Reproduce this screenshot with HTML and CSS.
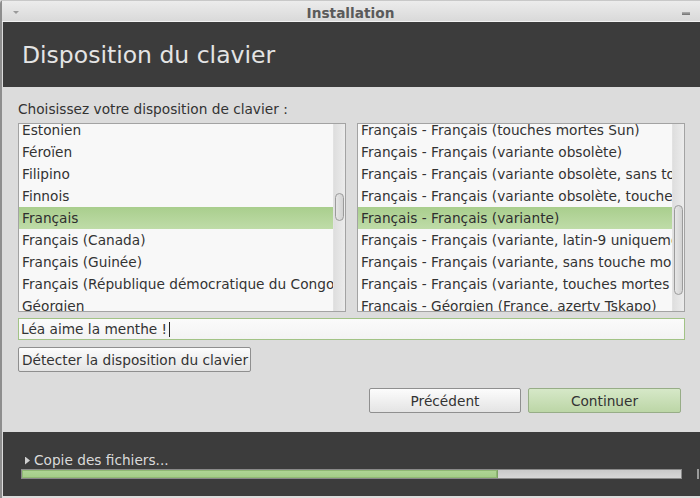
FILE: index.html
```html
<!DOCTYPE html>
<html lang="fr">
<head>
<meta charset="utf-8">
<title>Installation</title>
<link rel="stylesheet" href="styles.css">
</head>
<body>
<div class="window">
  <div class="titlebar">
    <span class="menu-tri"></span>
    <span class="title">Installation</span>
    <span class="min-btn"></span>
  </div>
  <div class="header">
    <h1 class="heading">Disposition du clavier</h1>
  </div>
  <div class="content">
    <div class="label">Choisissez votre disposition de clavier :</div>
    <div class="lists">
      <div class="list">
        <div class="viewport">
          <div class="rows">
            <div class="row">Estonien</div>
            <div class="row">Féroïen</div>
            <div class="row">Filipino</div>
            <div class="row">Finnois</div>
            <div class="row selected">Français</div>
            <div class="row">Français (Canada)</div>
            <div class="row">Français (Guinée)</div>
            <div class="row">Français (République démocratique du Congo)</div>
            <div class="row">Géorgien</div>
          </div>
        </div>
        <div class="scrollbar"><div class="thumb" style="margin-top:69px;height:28px"></div></div>
      </div>
      <div class="list">
        <div class="viewport">
          <div class="rows">
            <div class="row">Français - Français (touches mortes Sun)</div>
            <div class="row">Français - Français (variante obsolète)</div>
            <div class="row">Français - Français (variante obsolète, sans touches mortes)</div>
            <div class="row">Français - Français (variante obsolète, touches mortes Sun)</div>
            <div class="row selected">Français - Français (variante)</div>
            <div class="row">Français - Français (variante, latin-9 uniquement)</div>
            <div class="row">Français - Français (variante, sans touche morte)</div>
            <div class="row">Français - Français (variante, touches mortes Sun)</div>
            <div class="row">Français - Géorgien (France, azerty Tskapo)</div>
          </div>
        </div>
        <div class="scrollbar"><div class="thumb" style="margin-top:81px;height:90px"></div></div>
      </div>
    </div>
    <div class="entry">Léa aime la menthe !<span class="cursor"></span></div>
    <div class="detect-row"><button class="btn detect">Détecter la disposition du clavier</button></div>
    <div class="nav">
      <button class="btn nav-btn">Précédent</button>
      <button class="btn nav-btn primary">Continuer</button>
    </div>
  </div>
  <div class="footer">
    <div class="status"><span class="expander"></span><span class="status-text">Copie des fichiers...</span></div>
    <div class="progress-row">
      <div class="progress"><div class="fill" style="width:72.2%"></div></div>
      <div class="edge"></div>
    </div>
  </div>
</div>
</body>
</html>
```

FILE: styles.css
```css
* { box-sizing: border-box; }
html, body {
  margin: 0;
  padding: 0;
  width: 700px;
  height: 498px;
  overflow: hidden;
  background: #dcdcdc;
}
body {
  font-family: "DejaVu Sans", "Noto Sans", sans-serif;
  font-size: 13.7px;
  color: #333;
}
.window {
  width: 700px;
  height: 498px;
  display: flex;
  flex-direction: column;
  background: #dcdcdc;
  border-left: 2px solid #8e8e8e;
  border-top-left-radius: 4px;
}
.titlebar {
  height: 22px;
  padding-top: 3px;
  line-height: 18px;
  border-top: 1px solid #c8c8c8;
  border-bottom: 1px solid #f2f2f2;
  background: linear-gradient(#ececec, #d9d9d9);
  display: flex;
  align-items: flex-start;
}
.menu-tri {
  width: 0;
  height: 0;
  margin: 7px 0 0 11px;
  border-left: 3px solid transparent;
  border-right: 3px solid transparent;
  border-top: 3px solid #9a9a9a;
}
.title {
  flex: 1;
  text-align: center;
  font-weight: bold;
  color: #5a5a5a;
  margin-left: 0;
}
.min-btn {
  width: 8px;
  height: 3px;
  margin: 8px 10px 0 0;
  background: linear-gradient(#b0b0b0, #707070);
}
.header {
  height: 65px;
  margin-left: 1px;
  background: #3c3c3c;
  padding: 20px 0 0 19px;
}
.heading {
  margin: 0;
  font-family: "DejaVu Sans", sans-serif;
  font-weight: normal;
  font-size: 23.5px;
  line-height: 27px;
  color: #e4e4e4;
}
.content {
  padding: 14px 15px 0 16px;
  display: flex;
  flex-direction: column;
}
.label {
  line-height: 17px;
  height: 17px;
  color: #333;
}
.lists {
  margin-top: 5px;
  display: flex;
  gap: 11px;
}
.list {
  width: 328px;
  height: 189px;
  border: 1px solid #a3a3a3;
  background: #f8f8f8;
  display: flex;
}
.viewport {
  flex: 1;
  min-width: 0;
  overflow: hidden;
}
.rows {
  margin-top: -5px;
}
.row {
  height: 22px;
  line-height: 22px;
  padding-left: 3px;
  white-space: nowrap;
  overflow: hidden;
  color: #333;
}
.row.selected {
  background: linear-gradient(#a9ce8d, #bfdca8);
  color: #2f2f2f;
}
.scrollbar {
  width: 12px;
  background: linear-gradient(90deg, #dedede, #ececec);
  border-left: 1px solid #e2e2e2;
  padding-left: 1px;
}
.thumb {
  width: 9px;
  border: 1px solid #9b9b9b;
  border-radius: 5px;
  background: linear-gradient(90deg, #e6e6e6, #d2d2d2);
}
.entry {
  margin-top: 6px;
  height: 22px;
  border: 1px solid #a2c386;
  background: linear-gradient(#fbfbfb, #f3f3f3);
  line-height: 20px;
  padding-left: 2px;
  color: #333;
  display: flex;
  align-items: center;
}
.cursor {
  display: inline-block;
  width: 1px;
  height: 15px;
  margin-left: 2px;
  background: #222;
}
.detect-row {
  margin-top: 7px;
  display: flex;
}
.btn {
  font-family: "DejaVu Sans", "Noto Sans", sans-serif;
  font-size: 13.7px;
  color: #333;
  height: 25px;
  border: 1px solid #8f8f8f;
  border-radius: 2px;
  background: linear-gradient(#fcfcfc, #e4e4e4);
  padding: 0 3px;
  margin: 0;
}
.detect {
  width: 233px;
  text-align: left;
  white-space: nowrap;
}
.nav {
  margin-top: 16px;
  padding-right: 4px;
  display: flex;
  justify-content: flex-end;
  gap: 7px;
}
.nav-btn {
  width: 152px;
  text-align: center;
}
.nav-btn.primary {
  width: 153px;
  border-color: #97ad87;
  background: linear-gradient(#d6e8c8, #bcd6a6);
}
.footer {
  margin-top: 19px;
  margin-left: 1px;
  height: 64px;
  background: #3c3c3c;
  padding: 20px 0 0 18px;
}
.status {
  display: flex;
  align-items: center;
  height: 16px;
  line-height: 16px;
  color: #dadada;
}
.expander {
  flex: none;
  width: 5px;
  height: 8px;
  margin: 1px 0 0 4px;
  background: #d0d0d0;
  clip-path: polygon(0 0, 100% 50%, 0 100%);
}
.status-text {
  margin-left: 4px;
}
.progress-row {
  margin-top: 1px;
  display: flex;
  align-items: flex-start;
}
.progress {
  width: 661px;
  height: 10px;
  border: 1px solid #8a8a8a;
  background: linear-gradient(#c9c9c9, #d6d6d6);
}
.fill {
  height: 100%;
  background: linear-gradient(#b0d696, #a3cc87);
  border-right: 1px solid #7ea465;
  box-shadow: inset 0 0 0 1px #8fb873;
}
.edge {
  width: 2px;
  height: 10px;
  margin-left: 15px;
  background: #9a9a9a;
}
```
